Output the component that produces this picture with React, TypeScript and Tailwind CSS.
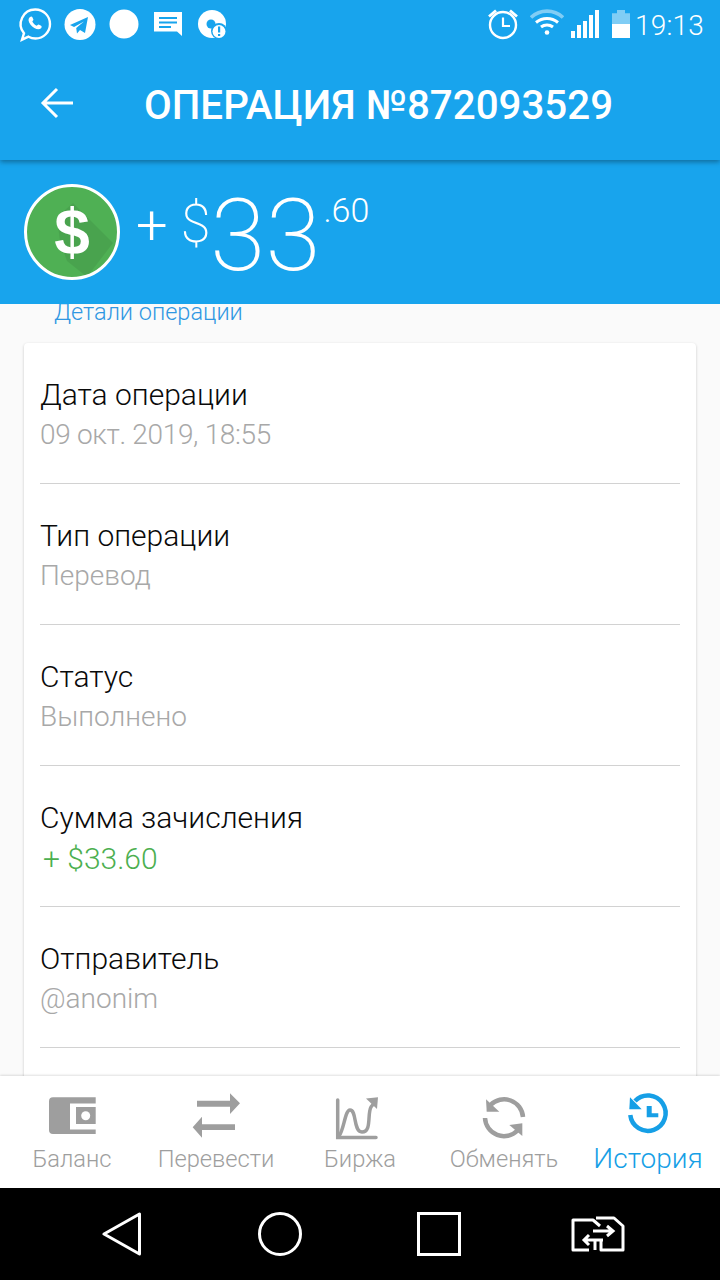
const R = "font-['Roboto',sans-serif]";

function Row({ label, value, green, tight }: { label: string; value: string; green?: boolean; tight?: boolean }) {
  return (
    <div className="h-[141px] border-b border-[#d2d2d2] pt-[33px]">
      <div className="h-[39px] text-[30px] leading-[38px] font-light text-[#0a0a0a]">{label}</div>
      {green ? (
        <div className="mt-[1px] ml-[3px] h-[40px] text-[30px] leading-[40px] font-light text-[#4caf50]">{value}</div>
      ) : (
        <div className={tight ? "h-[40px] text-[28px] leading-[40px] font-light tracking-[-0.33px] text-[#a8a8a8]" : "h-[40px] text-[28px] leading-[40px] font-light text-[#a8a8a8]"}>{value}</div>
      )}
    </div>
  );
}

function NavItem({ label, icon, active }: { label: string; icon: React.ReactNode; active?: boolean }) {
  return (
    <div className="flex w-[144px] flex-col items-center">
      <div className="h-[51px] w-[60px]">{icon}</div>
      <div className={active ? "text-[28px] leading-[36px] font-light text-[#169fe6]" : "text-[23.7px] leading-[36px] font-light text-[#9e9e9e]"}>{label}</div>
    </div>
  );
}

export default function App() {
  return (
    <div className={`${R} relative h-[1280px] w-[720px] overflow-hidden bg-[#fafafa]`}>
      <div className="relative z-20 h-[160px] bg-[#18a4ed] shadow-[0_2px_5px_rgba(0,0,0,0.35)]">
        <div className="flex h-[52px] items-center text-white">
          <svg width="216" height="52" viewBox="16 0 216 52" className="ml-[16px] shrink-0">
            <path d="M35.500 9.500A14.500 14.500 0 0 1 35.500 38.500c-2.600 0-5-.7-7-1.800l-6.500 3 2-6.500A14.500 14.500 0 0 1 35.500 9.500Z" fill="none" stroke="#fff" strokeWidth="2.400" />
            <path d="M30 17c1-.7 2-.7 2.400.2l1 2.300c.2.600-.8 1.500-1.100 2.100.9 1.800 2.500 3.300 4.300 4.200.7-.3 1.500-1.400 2.100-1.200l2.400 1.100c.8.500.7 1.600 0 2.500-1.500 1.600-4 1.500-6.800-.2-2.900-1.800-5.200-4.600-5.700-7.300-.2-1.600.4-2.800 1.400-3.700Z" fill="#fff" />
            <circle cx="80" cy="24.500" r="15.500" fill="#fff" />
            <path d="M70 25l18-8-3 16-5-3-3 3.500-.8-5.500 7.800-6.500-10 5.500Z" fill="#18a4ed" />
            <circle cx="124" cy="24" r="14.500" fill="#fff" />
            <path d="M154 12h28v24l-5-4.500h-23Z" fill="#fff" />
            <path d="M159 18h18M159 22.500h18M159 27h12" stroke="#18a4ed" strokeWidth="1.800" />
            <circle cx="212" cy="24" r="14" fill="#fff" />
            <circle cx="211" cy="24" r="4.500" fill="#18a4ed" />
            <circle cx="219" cy="31" r="8" fill="#18a4ed" />
            <circle cx="219" cy="31.500" r="6.500" fill="#fff" />
            <rect x="218" y="26.500" width="2.200" height="6" fill="#18a4ed" />
            <rect x="218" y="34" width="2.200" height="2" fill="#18a4ed" />
          </svg>
          <svg width="34" height="36" viewBox="0 0 34 36" className="ml-[254px] mt-[-4px] shrink-0">
            <circle cx="17" cy="19" r="13" fill="none" stroke="#fff" strokeWidth="2.400" />
            <path d="M17 11.500V20h7" fill="none" stroke="#fff" strokeWidth="2.200" />
            <path d="M3 10.500L10 4.500M31 10.500L24 4.500" stroke="#fff" strokeWidth="2.800" />
          </svg>
          <svg width="34" height="28" viewBox="0 0 34 28" className="ml-[10px] mt-[-6px] shrink-0">
            <path d="M1 8.500C10 0 24 0 33 8.500" fill="none" stroke="#fff" strokeOpacity="0.45" strokeWidth="3.600" />
            <path d="M6 13.500C12.500 8 21.500 8 28 13.500M11 18c3.500-2.800 8.500-2.800 12 0" fill="none" stroke="#fff" strokeWidth="3" />
            <circle cx="17" cy="23.500" r="2.300" fill="#fff" />
          </svg>
          <svg width="32" height="30" viewBox="0 0 32 30" className="ml-[4px] mt-[-4px] shrink-0">
            <path d="M3 22h4v7H3ZM9 16h4v13H9ZM15 12h4v17h-4ZM21 6h4v23h-4ZM27 1h4v28h-4Z" fill="#fff" />
          </svg>
          <svg width="20" height="30" viewBox="0 0 20 30" className="ml-[12px] mt-[-4px] shrink-0">
            <path d="M0 15V4.300h5V1h8v3.300h5V15Z" fill="#fff" fillOpacity="0.45" />
            <path d="M0 15h18v14H0Z" fill="#fff" />
          </svg>
          <span className="ml-[3px] text-[28px] leading-[52px] font-light tracking-[0.2px]">19:13</span>
        </div>
        <div className="flex h-[108px] items-center">
          <svg width="34" height="32" viewBox="0 0 34 32" className="ml-[40px] mt-[-6px] shrink-0">
            <path d="M33 16H3M17 2L3 16l14 14" fill="none" stroke="#fff" strokeWidth="3" />
          </svg>
          <h1 className="ml-[70px] text-[40.300px] font-medium leading-[44px] text-white">ОПЕРАЦИЯ №872093529</h1>
        </div>
      </div>

      <div className="relative z-10 flex h-[144px] items-start bg-[#18a4ed] pl-[24px] text-white">
        <div className="mt-[24px] flex h-[96px] w-[96px] shrink-0 items-center justify-center overflow-hidden rounded-full border-[3px] border-white bg-[#4fb054]">
          <svg width="90" height="90" viewBox="0 0 90 90">
            <path d="M46 16L86 56 60 90 40 74 33 55 30 30Z" fill="#000" fillOpacity="0.07" />
            <text x="45" y="67" textAnchor="middle" fill="#fff" style={{ fontFamily: "'Liberation Sans', sans-serif", fontWeight: 700, fontSize: 64 }}>$</text>
          </svg>
        </div>
        <span className="ml-[16px] mt-[37px] text-[56px] font-light leading-[56px]">+</span>
        <span className="ml-[13px] mt-[34px] text-[54px] font-extralight leading-[60px]">$</span>
        <span className="mt-[21px] text-[100px] font-extralight leading-[110px]">33</span>
        <span className="ml-[3px] mt-[30px] text-[34px] font-light leading-[40px]">.60</span>
      </div>

      <div className="relative mt-[-4px] ml-[54px] h-[24px] text-[23.500px] font-light leading-[24px] text-[#2f97e2]">Детали операции</div>

      <div className="mx-[24px] mt-[19px] h-[760px] rounded-[4px] bg-white px-[16px] shadow-[0_1px_3px_rgba(0,0,0,0.2)]">
        <Row label="Дата операции" value="09 окт. 2019, 18:55" tight />
        <Row label="Тип операции" value="Перевод" />
        <Row label="Статус" value="Выполнено" />
        <Row label="Сумма зачисления" value="+ $33.60" green />
        <Row label="Отправитель" value="@anonim" />
      </div>

      <div className="absolute bottom-[92px] left-0 right-0 z-10 flex h-[112px] bg-white pt-[14px] shadow-[0_-1px_2px_rgba(0,0,0,0.12)]">
        <NavItem
          label="Баланс"
          icon={
            <svg viewBox="0 0 60 50" className="h-[50px] w-[60px] overflow-visible">
              <path d="M53.700 7.300H11a4 4 0 0 0-4 4V40a4 4 0 0 0 4 4H53.700V39.500H28V13.500H53.700Z" fill="#9e9e9e" />
              <path d="M34 17H53.700V34H34Z" fill="#9e9e9e" />
              <circle cx="43.700" cy="25.700" r="4.500" fill="#fff" />
            </svg>
          }
        />
        <NavItem
          label="Перевести"
          icon={
            <svg viewBox="0 0 60 50" className="h-[50px] w-[60px] overflow-visible">
              <path d="M11 10.700H44V3.300L54 13.300 44 24V16.700H11Z" fill="#9e9e9e" />
              <path d="M49 34.300H16V26.700L6.700 37.300 16 47.700V40H49Z" fill="#9e9e9e" />
            </svg>
          }
        />
        <NavItem
          label="Биржа"
          icon={
            <svg viewBox="0 0 60 50" className="h-[50px] w-[60px] overflow-visible">
              <path d="M7.700 10V47.500H46" fill="none" stroke="#9e9e9e" strokeWidth="3.500" strokeLinecap="round" />
              <path d="M9 46C14 40 15 20 20 20C27 20 23 42 32 42C42 42 37 24 41 17L45 12" fill="none" stroke="#9e9e9e" strokeWidth="3.500" />
              <path d="M36 8.500L48 7.300L47 19Z" fill="#9e9e9e" />
            </svg>
          }
        />
        <NavItem
          label="Обменять"
          icon={
            <svg viewBox="0 0 60 50" className="h-[50px] w-[60px] overflow-visible">
              <path d="M16.500 15A19 19 0 0 1 49 27M43.500 40.500A19 19 0 0 1 11 28" fill="none" stroke="#9e9e9e" strokeWidth="4.500" />
              <path d="M12 9.300L12.700 21.700H25.300Z" fill="#9e9e9e" />
              <path d="M48.300 33.300V46L35.300 35Z" fill="#9e9e9e" />
            </svg>
          }
        />
        <NavItem
          active
          label="История"
          icon={
            <svg viewBox="0 0 60 50" className="h-[50px] w-[60px] overflow-visible">
              <path d="M17 11A17.700 17.700 0 1 1 12.300 25" fill="none" stroke="#169fe6" strokeWidth="4.500" />
              <path d="M12 7.300L11.300 19.300H23.700Z" fill="#169fe6" />
              <path d="M28.700 16H33.700V23.300H40.300V27.300H28.700Z" fill="#169fe6" />
            </svg>
          }
        />
      </div>

      <div className="absolute bottom-0 left-0 right-0 z-10 flex h-[92px] items-center bg-black">
        <svg width="40" height="44" viewBox="0 0 40 44" className="ml-[102px] shrink-0">
          <path d="M37.500 2v40L2 22Z" fill="none" stroke="#fff" strokeWidth="3" strokeLinejoin="round" />
        </svg>
        <svg width="44" height="44" viewBox="0 0 44 44" className="ml-[116px] shrink-0">
          <circle cx="22" cy="22" r="20.500" fill="none" stroke="#fff" strokeWidth="3" />
        </svg>
        <div className="ml-[115px] h-[44px] w-[44px] shrink-0 border-[3px] border-white" />
        <svg width="54" height="36" viewBox="0 0 54 36" className="ml-[110px] shrink-0">
          <path d="M18 34H2V4h20l7 6M30 24v10h22V10L43 2H25" fill="none" stroke="#fff" strokeWidth="3" strokeLinejoin="round" />
          <path d="M22 15h20M36 10l6 5-6 5M32 24H13M18 19l-5 5 5 5M24 24v10" fill="none" stroke="#fff" strokeWidth="3" />
        </svg>
      </div>
    </div>
  );
}
